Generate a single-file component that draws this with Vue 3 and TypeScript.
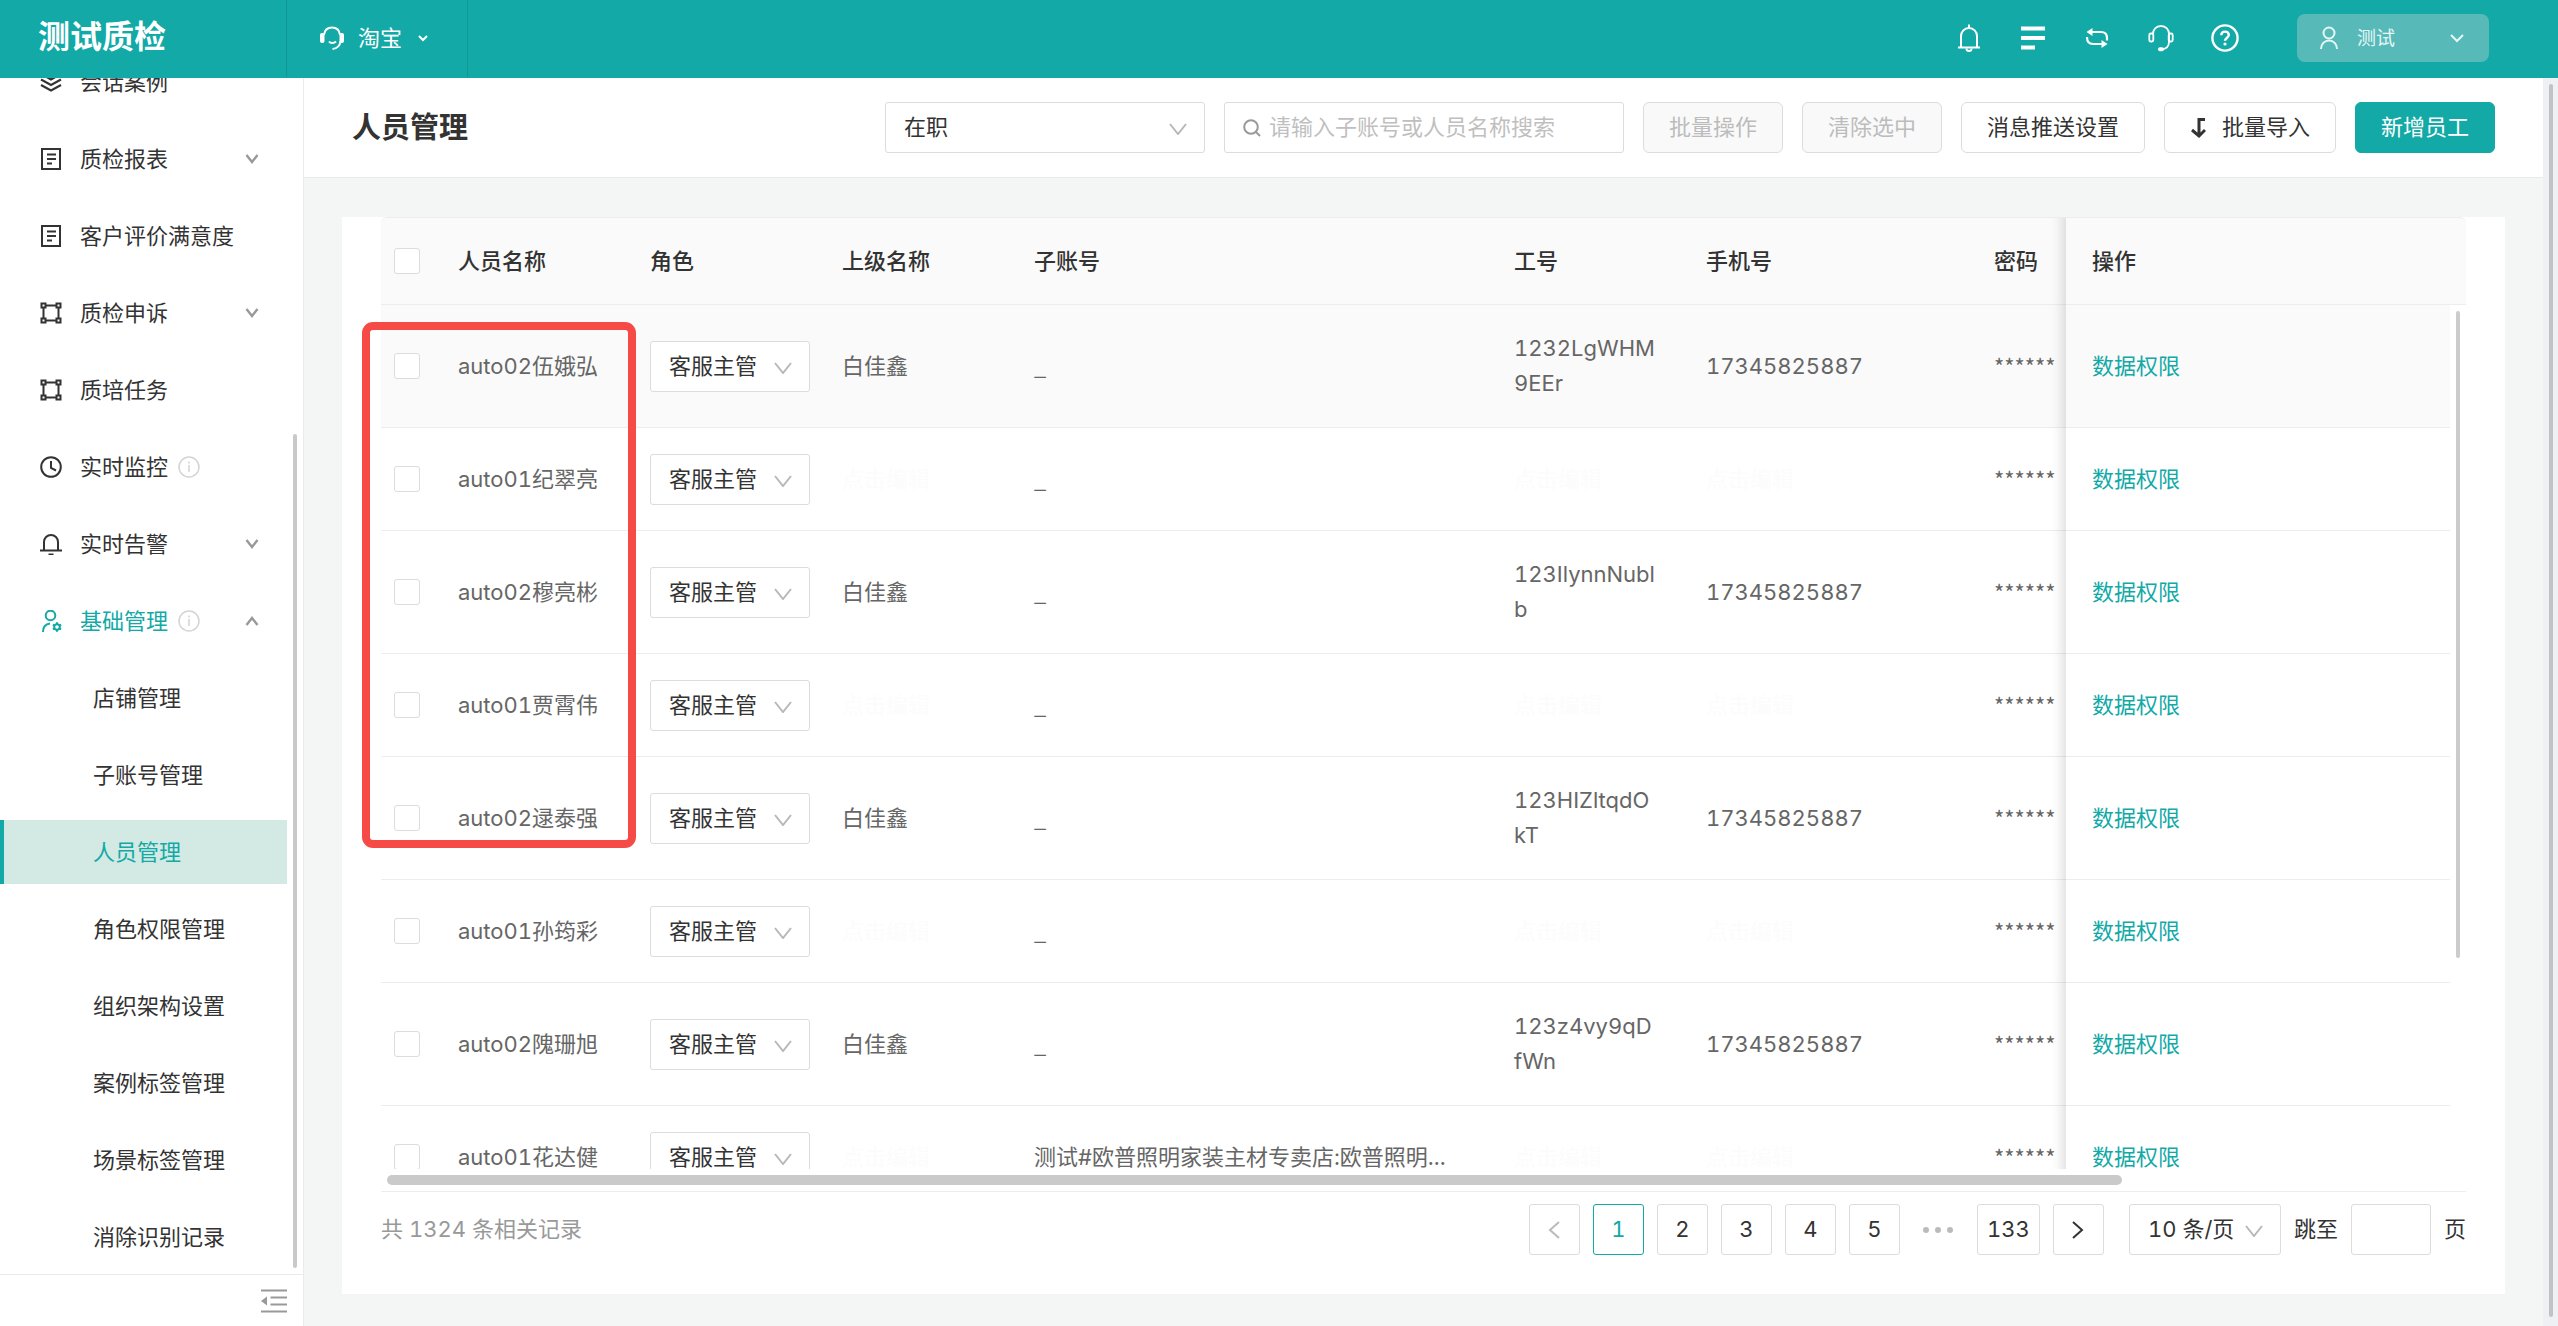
<script setup lang="ts">
import { ref } from 'vue'

interface MenuItem {
  label: string
  icon: string
  arrow?: 'down' | 'up'
  info?: boolean
  active?: boolean
}

interface Staff {
  name: string
  leader: string
  account: string
  code: string
  phone: string
}

const menu: MenuItem[] = [
  { label: '会话案例', icon: 'layers' },
  { label: '质检报表', icon: 'doc', arrow: 'down' },
  { label: '客户评价满意度', icon: 'doc' },
  { label: '质检申诉', icon: 'nodes', arrow: 'down' },
  { label: '质培任务', icon: 'nodes' },
  { label: '实时监控', icon: 'clock', info: true },
  { label: '实时告警', icon: 'bell', arrow: 'down' },
  { label: '基础管理', icon: 'user', arrow: 'up', info: true, active: true },
]

const submenu: string[] = [
  '店铺管理',
  '子账号管理',
  '人员管理',
  '角色权限管理',
  '组织架构设置',
  '案例标签管理',
  '场景标签管理',
  '消除识别记录',
]
const current = ref('人员管理')

const staff: Staff[] = [
  { name: 'auto02伍娥弘', leader: '白佳鑫', account: '', code: '1232LgWHM\n9EEr', phone: '17345825887' },
  { name: 'auto01纪翠亮', leader: '', account: '', code: '', phone: '' },
  { name: 'auto02穆亮彬', leader: '白佳鑫', account: '', code: '123IlynnNubl\nb', phone: '17345825887' },
  { name: 'auto01贾霄伟', leader: '', account: '', code: '', phone: '' },
  { name: 'auto02逯泰强', leader: '白佳鑫', account: '', code: '123HIZltqdO\nkT', phone: '17345825887' },
  { name: 'auto01孙筠彩', leader: '', account: '', code: '', phone: '' },
  { name: 'auto02隗珊旭', leader: '白佳鑫', account: '', code: '123z4vy9qD\nfWn', phone: '17345825887' },
  { name: 'auto01花达健', leader: '', account: '测试#欧普照明家装主材专卖店:欧普照明...', code: '', phone: '' },
]

const pages = [1, 2, 3, 4, 5]
const page = ref(1)
const keyword = ref('')
const jump = ref('')
</script>

<template>
  <div class="app">
    <header class="topbar">
      <div class="brand">测试质检</div>
      <button class="platform" type="button">
        <svg class="i24" viewBox="0 0 24 24" fill="none" stroke="#fff" stroke-width="2">
          <path d="M4 9C4.500 4.500 7.500 1.500 12 1.500s7.500 3 8 7.500M20.500 15c-.5 4.500-3 7.500-8 8" />
          <path d="M9 15.500c1.500 2 5 2 7 0" />
          <rect x="0" y="7" width="4.500" height="10" rx="2" fill="#fff" stroke="none" />
          <rect x="19.500" y="7" width="4.500" height="10" rx="2" fill="#fff" stroke="none" />
        </svg>
        <span>淘宝</span>
        <svg class="caret" viewBox="0 0 10 8" fill="none" stroke="#fff" stroke-width="2"><path d="M1 2l4 4 4-4" /></svg>
      </button>
      <nav class="tools" aria-label="工具">
        <button type="button" aria-label="通知">
          <svg viewBox="0 0 28 28" fill="none" stroke="#fff" stroke-width="2">
            <path d="M14 0.500v3M6 23V12a8 8 0 0 1 16 0v11M3 23.500h22" />
            <path d="M11.500 24.500a2.500 2.500 0 0 0 5 0" />
          </svg>
        </button>
        <button type="button" aria-label="列表">
          <svg viewBox="0 0 28 28" fill="#fff"><path d="M2 2.500h24v4H2zM2 12h24v4H2zM2 21.500h14v4H2z" /></svg>
        </button>
        <button type="button" aria-label="切换">
          <svg viewBox="0 0 28 28" fill="none" stroke="#fff" stroke-width="2.200">
            <path d="M9 8h9c4 0 6 2 6 6v2.500M4 13c0 4.500 2 7 6 7h9" />
            <path d="M3.500 8l6-4v8zM24.500 20l-6-4v8z" fill="#fff" stroke="none" />
          </svg>
        </button>
        <button type="button" aria-label="客服">
          <svg viewBox="0 0 28 28" fill="none" stroke="#fff" stroke-width="1.800">
            <path d="M6 10C6 5.500 9 2 14 2s8 3.500 8 8v8c0 4-2.500 7-8 7.500" />
            <rect x="2.300" y="9.500" width="4" height="8" rx="1.500" />
            <rect x="21.700" y="9.500" width="4" height="8" rx="1.500" />
            <rect x="11" y="23.200" width="6" height="4" rx="2" fill="#fff" stroke="none" />
          </svg>
        </button>
        <button type="button" aria-label="帮助">
          <svg viewBox="0 0 28 28" fill="none" stroke="#fff" stroke-width="2.400">
            <circle cx="14" cy="14" r="12.600" />
            <path d="M10.300 11.300c0-2.300 1.600-3.700 3.800-3.700s3.700 1.500 3.700 3.500c0 2.500-3.800 2.800-3.800 5.700" />
            <circle cx="14" cy="20" r="1.600" fill="#fff" stroke="none" />
          </svg>
        </button>
      </nav>
      <button class="account" type="button">
        <svg class="person" viewBox="0 0 20 24" fill="none" stroke="#e4f7f6" stroke-width="2">
          <circle cx="10" cy="7" r="5.500" /><path d="M2 23c0-5 3.500-8.500 8-8.500s8 3.500 8 8.500" />
        </svg>
        <span>测试</span>
        <svg class="down" viewBox="0 0 14 9" fill="none" stroke="#e4f7f6" stroke-width="2"><path d="M1 1l6 6 6-6" /></svg>
      </button>
    </header>

    <div class="body">
      <aside class="side">
        <div class="side-view">
          <ul class="menu">
            <li v-for="m in menu" :key="m.label">
              <a href="#" class="item" :class="{ on: m.active }">
                <svg class="lead" viewBox="0 0 22 22" fill="none" stroke="currentColor" stroke-width="2">
                  <g v-if="m.icon === 'layers'">
                    <path d="M1 3l10 5.500L21 3M1 8.500L11 14l10-5.500M1 14l10 5.500L21 14" />
                  </g>
                  <g v-else-if="m.icon === 'doc'">
                    <path d="M2 1h18v20H2zM7 6.500h9M7 11h9M7 15.500h5" />
                  </g>
                  <g v-else-if="m.icon === 'nodes'">
                    <path d="M6 3.500h10M6 18.500h10M3.500 6v10M18.500 6v10" />
                    <path d="M1.500 1.500h4v4h-4zM16.500 1.500h4v4h-4zM1.500 16.500h4v4h-4zM16.500 16.500h4v4h-4z" />
                  </g>
                  <g v-else-if="m.icon === 'clock'">
                    <circle cx="11" cy="11" r="9.800" /><path d="M11 5v7l5 2.500" />
                  </g>
                  <g v-else-if="m.icon === 'bell'">
                    <path d="M4 17.500V9a7 7 0 0 1 14 0v8.500M0 17.500h22M8.500 21.500h5" />
                  </g>
                  <g v-else>
                    <circle cx="10.500" cy="5.500" r="4.800" />
                    <path d="M3 22c0-4.500 2.500-8 7-8.500" />
                    <circle cx="17" cy="17" r="2.800" />
                    <path d="M17 12.200v2M17 19.800v2M12.900 14.600l1.700 1M19.400 18.400l1.700 1M12.900 19.400l1.700-1M19.400 15.600l1.700-1" />
                  </g>
                </svg>
                <span>{{ m.label }}</span>
                <svg v-if="m.info" class="info" viewBox="0 0 22 22" fill="none" stroke="#d4d4d4" stroke-width="1.500">
                  <circle cx="11" cy="11" r="10" /><path d="M11 9v7M11 5.500v2" />
                </svg>
                <svg
                  v-if="m.arrow"
                  class="arrow"
                  :class="m.arrow"
                  viewBox="0 0 14 10"
                  fill="none"
                  stroke="#999"
                  stroke-width="2.400"
                ><path d="M1.500 1l5.500 7 5.500-7" /></svg>
              </a>
            </li>
            <li v-for="s in submenu" :key="s">
              <a href="#" class="item sub" :class="{ selected: s === current }" @click.prevent="current = s">{{ s }}</a>
            </li>
          </ul>
          <div class="side-thumb"></div>
        </div>
        <div class="side-foot">
          <button type="button" aria-label="收起菜单">
            <svg viewBox="0 0 26 24" fill="none" stroke="#999" stroke-width="2">
              <path d="M0 1.500h26M9.500 8.500H26M9.500 15.500H26M0 22.500h26" />
              <path d="M6 7.500v9L0 12z" fill="#999" stroke="none" />
            </svg>
          </button>
        </div>
      </aside>

      <main class="main">
        <div class="pagehead">
          <h1>人员管理</h1>
          <div class="actions">
            <div class="select status">
              <select aria-label="在职状态"><option>在职</option></select>
              <svg viewBox="0 0 18 12" fill="none" stroke="#b8b8b8" stroke-width="2"><path d="M1 1l8 10 8-10" /></svg>
            </div>
            <label class="search">
              <svg viewBox="0 0 18 18" fill="none" stroke="#999" stroke-width="2">
                <circle cx="8" cy="8" r="6.800" /><path d="M13 13l4 4" />
              </svg>
              <input v-model="keyword" type="text" placeholder="请输入子账号或人员名称搜索" aria-label="搜索" />
            </label>
            <button class="btn" type="button" disabled>批量操作</button>
            <button class="btn" type="button" disabled>清除选中</button>
            <button class="btn" type="button">消息推送设置</button>
            <button class="btn" type="button">
              <svg viewBox="0 0 16 20" fill="none" stroke="#333" stroke-width="3">
                <path d="M15 1.500H9V17M2 12l7 6 6-6" />
              </svg>
              <span>批量导入</span>
            </button>
            <button class="btn primary" type="button">新增员工</button>
          </div>
        </div>

        <div class="content">
          <section class="card">
            <div class="table-view">
              <table>
                <colgroup>
                  <col class="c-check" /><col class="c-std" /><col class="c-std" /><col class="c-std" />
                  <col class="c-acct" /><col class="c-std" /><col class="c-phone" /><col class="c-pwd" />
                  <col /><col class="c-gutter" />
                </colgroup>
                <thead>
                  <tr>
                    <th class="check"><input type="checkbox" aria-label="全选" /></th>
                    <th>人员名称</th>
                    <th>角色</th>
                    <th>上级名称</th>
                    <th>子账号</th>
                    <th>工号</th>
                    <th>手机号</th>
                    <th>密码</th>
                    <th class="fixed">操作</th>
                    <th class="gutter"></th>
                  </tr>
                </thead>
                <tbody>
                  <tr v-for="(r, i) in staff" :key="r.name" :class="{ hover: i === 0, tall: r.code }">
                    <td class="check"><input type="checkbox" :aria-label="r.name" /></td>
                    <td>{{ r.name }}</td>
                    <td>
                      <div class="select role">
                        <select :aria-label="r.name + '角色'"><option>客服主管</option></select>
                        <svg viewBox="0 0 18 12" fill="none" stroke="#b8b8b8" stroke-width="2"><path d="M1 1l8 10 8-10" /></svg>
                      </div>
                    </td>
                    <td><span v-if="r.leader">{{ r.leader }}</span><span v-else class="ghost">点击编辑</span></td>
                    <td><span v-if="r.account">{{ r.account }}</span><span v-else class="han">_</span></td>
                    <td class="code"><span v-if="r.code">{{ r.code }}</span><span v-else class="ghost">点击编辑</span></td>
                    <td><span v-if="r.phone">{{ r.phone }}</span><span v-else class="ghost">点击编辑</span></td>
                    <td><span class="han">******</span></td>
                    <td class="fixed"><a href="#">数据权限</a></td>
                    <td class="gutter"></td>
                  </tr>
                </tbody>
              </table>
              <div class="v-thumb"></div>
            </div>
            <div class="h-scroll"><div class="h-thumb"></div></div>

            <footer class="pager">
              <span class="total">共 1324 条相关记录</span>
              <button class="pg" type="button" aria-label="上一页" disabled>
                <svg viewBox="0 0 12 18" fill="none" stroke="#bbb" stroke-width="2"><path d="M11 1L2 9l9 8" /></svg>
              </button>
              <button
                v-for="p in pages"
                :key="p"
                type="button"
                class="pg"
                :class="{ cur: p === page }"
                @click="page = p"
              >{{ p }}</button>
              <span class="dots"><i></i><i></i><i></i></span>
              <button class="pg wide" type="button">133</button>
              <button class="pg" type="button" aria-label="下一页">
                <svg viewBox="0 0 12 18" fill="none" stroke="#333" stroke-width="2"><path d="M1 1l9 8-9 8" /></svg>
              </button>
              <div class="select size">
                <select aria-label="每页条数"><option>10 条/页</option></select>
                <svg viewBox="0 0 18 12" fill="none" stroke="#b8b8b8" stroke-width="2"><path d="M1 1l8 10 8-10" /></svg>
              </div>
              <label for="jump">跳至</label>
              <input id="jump" v-model="jump" class="jump" type="text" />
              <span>页</span>
            </footer>
            <div class="mark"></div>
          </section>
        </div>
      </main>

      <div class="page-rail"><div></div></div>
    </div>
  </div>
</template>

<style>
body {
  margin: 0;
}
</style>

<style scoped>
.app,
.app * {
  box-sizing: border-box;
}
.app {
  height: 100vh;
  display: flex;
  flex-direction: column;
  overflow: hidden;
  font-family: Inter, "Noto Sans CJK SC", sans-serif;
  font-size: 22px;
  line-height: 35px;
  font-variant-numeric: tabular-nums;
  color: #333;
  background: #f4f6f5;
}
button,
input,
select {
  font: inherit;
  font-variant-numeric: tabular-nums;
  color: inherit;
  margin: 0;
}
button {
  cursor: pointer;
}
a {
  text-decoration: none;
  color: #12a9a7;
}
svg {
  display: block;
  flex: none;
}

/* top bar */
.topbar {
  flex: none;
  height: 78px;
  display: flex;
  align-items: center;
  background: #12a9a7;
  color: #fff;
  padding: 0 69px 2px 0;
}
.brand {
  width: 286px;
  padding-left: 38px;
  padding-bottom: 4px;
  font-size: 32px;
  font-weight: 700;
}
.platform {
  width: 182px;
  height: 78px;
  display: flex;
  align-items: center;
  border: 0 solid #109694;
  border-width: 0 1px;
  background: none;
  padding: 0 0 0 33px;
}
.platform span {
  margin: 0 16px 0 14px;
}
.i24 {
  width: 24px;
  height: 24px;
}
.caret {
  width: 10px;
  height: 8px;
}
.tools {
  margin-left: auto;
  display: flex;
  gap: 36px;
}
.tools button {
  border: 0;
  background: none;
  padding: 0;
}
.tools svg {
  width: 28px;
  height: 28px;
}
.account {
  width: 192px;
  height: 48px;
  margin-left: 58px;
  padding: 0 25px 0 22px;
  display: flex;
  align-items: center;
  border: 0;
  border-radius: 8px;
  background: #58bab8;
  color: #e4f7f6;
  font-size: 19px;
}
.account span {
  margin-left: 18px;
}
.person {
  width: 20px;
  height: 24px;
}
.down {
  width: 14px;
  height: 9px;
  margin-left: auto;
}

.body {
  flex: 1;
  min-height: 0;
  display: flex;
}

/* sidebar */
.side {
  flex: none;
  width: 304px;
  display: flex;
  flex-direction: column;
  background: #fff;
  border-right: 1px solid #ebebeb;
}
.side-view {
  flex: 1;
  min-height: 0;
  position: relative;
  display: flex;
  flex-direction: column;
  justify-content: flex-end;
  overflow: hidden;
  padding: 0 16px 5px 0;
}
.menu {
  list-style: none;
  margin: 0;
  padding: 0;
  display: flex;
  flex-direction: column;
  gap: 13px;
}
.item {
  height: 64px;
  display: flex;
  align-items: center;
  padding: 0 28px 0 40px;
  color: #333;
}
.item.on {
  color: #12a9a7;
}
.lead {
  width: 22px;
  height: 22px;
  margin-right: 18px;
}
.info {
  width: 22px;
  height: 22px;
  margin-left: 10px;
}
.arrow {
  width: 14px;
  height: 10px;
  margin-left: auto;
}
.arrow.up {
  transform: rotate(180deg);
}
.sub {
  padding-left: 93px;
}
.sub.selected {
  padding-left: 89px;
  border-left: 4px solid #12a9a7;
  background: #d3e9e3;
  color: #12a9a7;
}
.side-thumb {
  position: absolute;
  right: 6px;
  top: 356px;
  bottom: 6px;
  width: 4px;
  border-radius: 2px;
  background: #c9c9c9;
}
.side-foot {
  flex: none;
  height: 52px;
  border-top: 1px solid #ebebeb;
  display: flex;
  align-items: center;
  justify-content: flex-end;
  padding-right: 16px;
}
.side-foot button {
  border: 0;
  background: none;
  padding: 0;
}
.side-foot svg {
  width: 26px;
  height: 24px;
}

/* main area */
.main {
  flex: 1;
  min-width: 0;
  display: flex;
  flex-direction: column;
}
.pagehead {
  flex: none;
  height: 100px;
  display: flex;
  align-items: center;
  justify-content: space-between;
  padding: 0 48px;
  background: #fff;
  border-bottom: 1px solid #e8eaea;
}
h1 {
  margin: 0;
  font-size: 29px;
  font-weight: 700;
  white-space: nowrap;
}
.actions {
  display: flex;
  align-items: center;
  gap: 19px;
}
.select {
  position: relative;
  display: flex;
  align-items: center;
}
.select select {
  appearance: none;
  width: 100%;
  height: 51px;
  padding: 0 18px;
  border: 1px solid #dcdcdc;
  border-radius: 3px;
  background: #fff;
  color: #333;
}
.select svg {
  position: absolute;
  right: 18px;
  top: 21px;
  width: 18px;
  height: 12px;
  pointer-events: none;
}
.status {
  width: 320px;
}
.search {
  width: 400px;
  height: 51px;
  display: flex;
  align-items: center;
  gap: 8px;
  padding: 0 18px;
  border: 1px solid #dcdcdc;
  border-radius: 3px;
  background: #fff;
}
.search svg {
  width: 18px;
  height: 18px;
}
.search input {
  flex: 1;
  min-width: 0;
  border: 0;
  padding: 0;
  outline: 0;
  background: none;
}
.search input::placeholder {
  color: #bfbfbf;
  opacity: 1;
}
.btn {
  height: 51px;
  display: flex;
  align-items: center;
  gap: 16px;
  padding: 0 25px;
  border: 1px solid #dcdcdc;
  border-radius: 6px;
  background: #fff;
  color: #333;
  white-space: nowrap;
}
.btn svg {
  width: 16px;
  height: 20px;
}
.btn:disabled {
  background: #f9f9f9;
  color: #bcbcbc;
}
.btn.primary {
  border-color: #12a9a7;
  background: #12a9a7;
  color: #fff;
}

.content {
  flex: 1;
  min-height: 0;
  display: flex;
  padding: 39px 38px 32px;
}
.card {
  flex: 1;
  min-width: 0;
  position: relative;
  display: flex;
  flex-direction: column;
  padding: 0 39px 39px;
  background: #fff;
}
.table-view {
  flex: 1;
  min-height: 0;
  position: relative;
  overflow: hidden;
}
table {
  width: 100%;
  table-layout: fixed;
  border-collapse: separate;
  border-spacing: 0;
}
.c-check {
  width: 51px;
}
.c-std {
  width: 192px;
}
.c-acct {
  width: 480px;
}
.c-phone {
  width: 288px;
}
.c-pwd {
  width: 98px;
}
.c-gutter {
  width: 16px;
}
th,
td {
  padding: 0 0 0 26px;
  text-align: left;
  white-space: nowrap;
  border-bottom: 1px solid #ededed;
}
th {
  height: 88px;
  border-top: 1px solid #ededed;
  background: #fafafa;
  font-weight: 500;
}
th:first-child {
  border-top-left-radius: 6px;
}
th:last-child {
  border-top-right-radius: 6px;
}
td {
  height: 103px;
  color: #666;
}
.tall td {
  height: 123px;
}
.hover td {
  background: #fafafa;
}
td.code {
  white-space: pre-line;
}
.han {
  font-family: "Noto Sans CJK SC", sans-serif;
}
th.check,
td.check {
  padding-left: 13px;
}
.check input {
  appearance: none;
  display: block;
  width: 26px;
  height: 26px;
  border: 1px solid #dcdcdc;
  border-radius: 3px;
  background: #fff;
}
.fixed {
  position: relative;
}
.fixed::before {
  content: "";
  position: absolute;
  top: 0;
  bottom: -1px;
  left: -48px;
  width: 48px;
  box-shadow: inset -16px 0 13px -13px rgba(0, 0, 0, 0.15);
  pointer-events: none;
}
td.gutter {
  padding: 0;
  border: 0;
  background: #fff;
}
th.gutter {
  padding: 0;
}
.role {
  width: 160px;
}
.ghost {
  color: #fcfcfc;
}
.v-thumb {
  position: absolute;
  right: 6px;
  top: 94px;
  width: 4px;
  height: 68%;
  border-radius: 2px;
  background: #ccc;
}
.h-scroll {
  flex: none;
  height: 23px;
  padding: 6px 344px 6px 6px;
  border-bottom: 1px solid #ededed;
}
.h-thumb {
  height: 10px;
  border-radius: 5px;
  background: #cacaca;
}

/* pagination */
.pager {
  flex: none;
  display: flex;
  align-items: center;
  gap: 13px;
  padding-top: 12px;
  white-space: nowrap;
}
.total {
  margin-right: auto;
  color: #999;
}
.pg {
  width: 51px;
  height: 51px;
  display: flex;
  align-items: center;
  justify-content: center;
  padding: 0;
  border: 1px solid #dcdcdc;
  border-radius: 3px;
  background: #fff;
}
.pg.wide {
  width: 63px;
}
.pg.cur {
  border-color: #12a9a7;
  color: #12a9a7;
}
.pg svg {
  width: 12px;
  height: 18px;
}
.dots {
  width: 51px;
  display: flex;
  justify-content: center;
  gap: 6px;
}
.dots i {
  width: 6px;
  height: 6px;
  border-radius: 50%;
  background: #bbb;
}
.size {
  width: 152px;
  margin-left: 12px;
}
.jump {
  width: 80px;
  height: 51px;
  border: 1px solid #dcdcdc;
  border-radius: 3px;
  background: #fff;
}

/* highlight frame over the name column */
.mark {
  position: absolute;
  left: 20px;
  top: 105px;
  width: 274px;
  height: 526px;
  border: 8px solid #f64a46;
  border-radius: 11px;
  pointer-events: none;
}

.page-rail {
  flex: none;
  width: 15px;
  display: flex;
  justify-content: center;
  padding: 6px 0 9px;
  background: #eff0f4;
}
.page-rail div {
  width: 4px;
  border-radius: 2px;
  background: #c1c1c6;
}
</style>
